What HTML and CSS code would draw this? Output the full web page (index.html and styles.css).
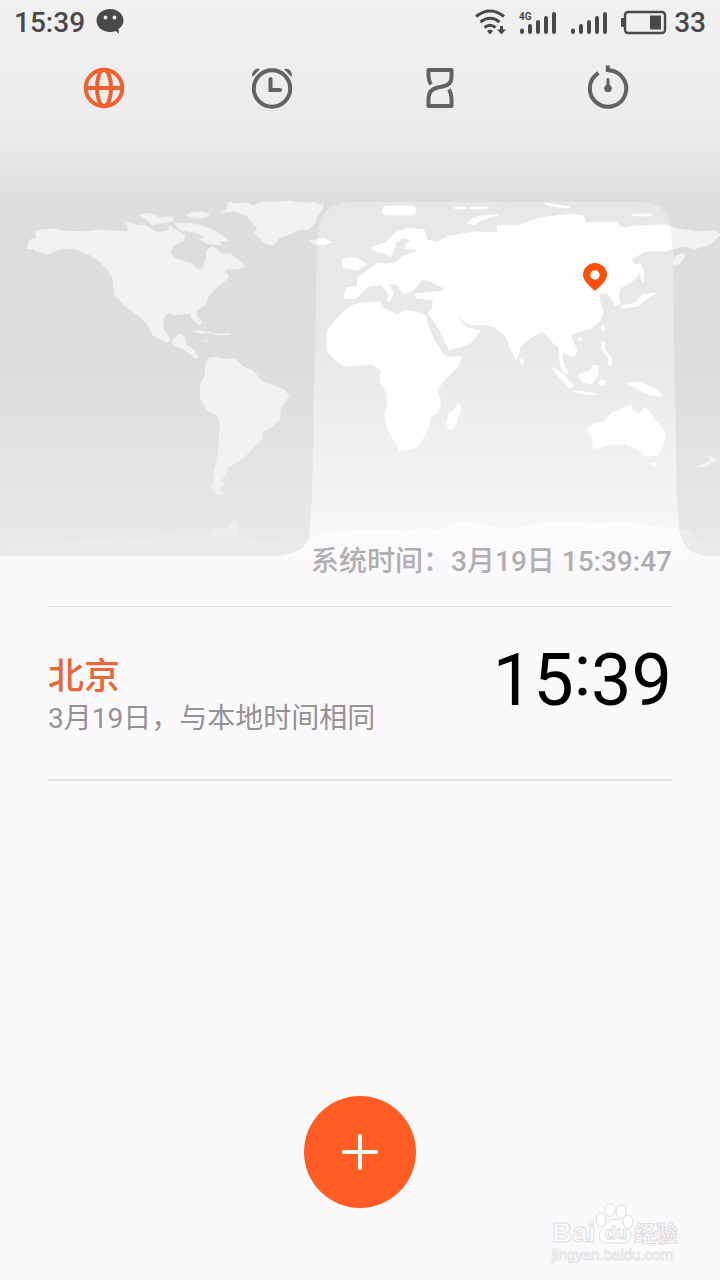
FILE: index.html
```html
<!DOCTYPE html>
<html lang="zh-CN">
<head>
  <meta charset="UTF-8">
  <meta name="viewport" content="width=device-width, initial-scale=1">
  <title>时钟</title>
  <link rel="stylesheet" href="styles.css">
</head>
<body>

<header class="top">
  <div class="status-bar">
    <span>15:39</span>
    <svg class="chat-icon" width="28" height="26" viewBox="0 0 28 26">
      <path fill="#4a484b" d="M14 0C6.500 0 .5 5 .5 11.500S6.500 23 14 23c2 0 4-.4 5.500-1l3.500 2.500-.5-4.500c3-2 5-5 5-8.500C27.500 5 21.500 0 14 0z"/>
      <circle cx="9.500" cy="8.500" r="1.900" fill="#f0eef0"/>
      <circle cx="18.500" cy="8.500" r="1.900" fill="#f0eef0"/>
    </svg>
    <div class="status-right">
      <svg width="32" height="28" viewBox="0 0 32 28" fill="none" stroke="#4a484b" stroke-width="3">
        <path d="M2 8.500q14-11 28 0M6.500 14q9.500-7.500 19 0M10.500 19.500q5.500-4.500 11 0"/>
        <path d="M13 23q3-3 6 0l-3 3.500z" fill="#4a484b" stroke="none"/>
        <path d="M26 18h3v3.500h3l-4.500 5-4.500-5h3z" fill="#4a484b" stroke="none"/>
      </svg>
      <svg width="38" height="28" viewBox="0 0 38 28" fill="none" stroke="#4a484b" stroke-width="4" stroke-linecap="round">
        <path d="M3 22.500v1.500M11 18v6M19 14v10M27 10v14M35 6v18"/>
        <text class="net-type" x="0" y="12">4G</text>
      </svg>
      <svg width="38" height="28" viewBox="0 0 38 28" fill="none" stroke="#4a484b" stroke-width="4" stroke-linecap="round">
        <path d="M3 22.500v1.500M11 18v6M19 14v10M27 10v14M35 6v18"/>
      </svg>
      <svg width="46" height="28" viewBox="0 0 46 28">
        <rect x="4" y="4" width="40" height="21" rx="3" fill="none" stroke="#4a484b" stroke-width="2.400"/>
        <rect x="0" y="10" width="4" height="9" rx="1" fill="#4a484b"/>
        <rect x="29" y="7.500" width="11" height="14" fill="#4a484b"/>
      </svg>
      <span>33</span>
    </div>
  </div>

  <nav class="tabs">
    <button type="button" class="tab active" aria-label="世界时钟">
      <svg width="42" height="42" viewBox="0 0 42 42" fill="none" stroke="currentColor" stroke-width="4">
        <circle cx="21" cy="21" r="18.300"/>
        <ellipse cx="21" cy="21" rx="7" ry="18.300"/>
        <path d="M2 21h38"/>
      </svg>
    </button>
    <button type="button" class="tab" aria-label="闹钟">
      <svg width="42" height="42" viewBox="0 0 42 42" fill="none" stroke="currentColor" stroke-width="4">
        <circle cx="21" cy="21.500" r="18.200"/>
        <path d="M19.500 12v11H29" stroke-linecap="round"/>
        <path d="M1 9C1 4 4 1 9 2L2.500 9zM41 9c0-5-3-8-8-7l6.500 7z" fill="currentColor" stroke="none"/>
      </svg>
    </button>
    <button type="button" class="tab" aria-label="计时器">
      <svg width="42" height="42" viewBox="0 0 42 42" fill="none" stroke="currentColor" stroke-width="4" stroke-linejoin="round">
        <path d="M12 17.500Q9.500 13 9.500 9V3h23v7c0 6-3 8-9 9.500l-5 1c-6 1.500-9 5-9 10.500v8h23v-8q0-4-2.500-8.500"/>
      </svg>
    </button>
    <button type="button" class="tab" aria-label="秒表">
      <svg width="42" height="42" viewBox="0 0 42 42" fill="none" stroke="currentColor" stroke-width="4">
        <path d="M21 3.300A18.200 18.200 0 1 1 11.500 6"/>
        <path d="M20.800-1.500V5"/>
        <path d="M21 12.500V21" stroke-width="3" stroke-linecap="round"/>
        <circle cx="21" cy="21.500" r="3.800" fill="currentColor" stroke="none"/>
      </svg>
    </button>
  </nav>
</header>

<main>
  <section class="world">
    <svg class="map" viewBox="0 132 720 474">
      <defs>
        <linearGradient id="night" gradientUnits="userSpaceOnUse" x1="0" y1="132" x2="0" y2="556">
          <stop offset="0" stop-color="#ebeaed"/>
          <stop offset=".08" stop-color="#e5e4e7"/>
          <stop offset=".17" stop-color="#dddcdf"/>
          <stop offset=".55" stop-color="#dddcdf"/>
          <stop offset="1" stop-color="#e9e8ea"/>
        </linearGradient>
        <linearGradient id="day" gradientUnits="userSpaceOnUse" x1="0" y1="202" x2="0" y2="556">
          <stop offset="0" stop-color="#e7e6e9"/>
          <stop offset=".45" stop-color="#e9e8eb"/>
          <stop offset=".8" stop-color="#f3f2f5"/>
          <stop offset="1" stop-color="#faf9fc"/>
        </linearGradient>
        <linearGradient id="ice" gradientUnits="userSpaceOnUse" x1="0" y1="520" x2="0" y2="556">
          <stop offset="0" stop-color="#fefefe"/>
          <stop offset="1" stop-color="#fbf9fc"/>
        </linearGradient>
        <linearGradient id="ice-night" gradientUnits="userSpaceOnUse" x1="0" y1="520" x2="0" y2="556">
          <stop offset="0" stop-color="#efeef0"/>
          <stop offset="1" stop-color="#e9e8ea"/>
        </linearGradient>
        <path id="daylight" d="M350 202H642Q668 203 671 228L673 250 674 340 677 500 679 530Q683 555 708 556H280Q307 552 309 536L312 500 315 340 317 245 319 226Q324 203 350 202z"/>
        <clipPath id="lit"><use href="#daylight"/></clipPath>
        <path id="antarctica" d="M0 548 60 543 75 541 90 538 105 540 120 537 135 540 155 539 157 534 175 535 195 537 213 534 212 530 228 528 232 522 237 520 239 535 260 541 300 544 315 537 340 531 365 530 390 530 405 531 425 528 437 531 450 525 465 521 480 524 510 529 530 524 560 522 600 524 625 521 650 526 680 529 696 533 684 538 720 545V556H0z"/>
        <g id="land">
          <!-- north america -->
          <path d="M27 249 30 240 37 238 35 232 42 230 56 229 62 231 85 232 100 230 115 231 127 232 129 228 126 223 136 225 146 226 158 233 168 231 170 226 178 231 185 236 183 241 173 245 170 252 174 258 186 262 193 265 198 270 203 268 206 260 207 250 212 247 218 250 221 254 231 254 238 260 245 266 238 269 227 269 224 272 228 275 227 279 218 286 208 296 206 304 196 311 197 316 202 323 199 325 193 320 190 313 175 315 170 313 165 315 163 320 163 328 168 336 170 341 166 342 153 335 148 325 138 315 125 306 115 295 113 278 105 267 98 260 90 255 76 249 68 248 57 250 48 254 36 251 33 248z"/>
          <path d="M172 341 179 334 184 336 186 345 194 350 198 358 195 358 185 350 174 345z"/>
          <path d="M140 215 150 213 160 218 172 217 173 221 160 223 152 225 146 219z"/>
          <ellipse cx="198" cy="215" rx="11" ry="3"/>
          <path d="M175 224Q192 221 210 229T227 241L219 241 221 245 206 243 200 239 205 237 195 232 180 230z"/>
          <path d="M222 212 228 208 227 203 231 202 234 204 248 203 252 206 262 202 278 202 290 201 300 203 315 203 320 205 323 203 322 210 317 216 315 223 309 229 298 230 290 234 279 238 274 245 266 244 254 233 258 230 256 226 246 215 235 211z"/>
          <path d="M192 331 202 331 211 333 200 333zM213 334H230L222 335zM203 341H208"/>
          <!-- south america -->
          <path d="M206 364 209 358 216 357 222 359 235 359 243 367 252 370 263 382 285 390 289 396 281 407 279 420 270 428 262 431 262 438 253 448 243 458 234 464 228 467 226 475 221 480 223 484 219 488 223 495 217 494 212 487 215 480 213 477 216 465 219 450 220 422 216 414 208 411 200 397 201 383 205 376z"/>
          <!-- europe and asia -->
          <path d="M344 298 346 288 357 287 358 277 370 269 378 263 385 264 395 263 403 256 417 252 417 249 405 249 406 244 412 240 404 238 396 242 393 252 390 257 385 253 372 250 373 247 385 243 395 233 408 228 424 230 427 240 437 242 450 236 475 232 498 233 497 226 510 225 517 226 540 218 572 214 583 216 586 223 599 222 617 223 622 228 635 226 645 226 655 225 665 225 678 229 700 232 715 231 720 235 712 243 695 249 685 246 665 251 645 251 632 259 633 264 642 265 640 270 636 278 630 283 620 288 618 295 620 304 615 306 613 300 608 294 600 293 599 299 603 312 600 321 590 329 577 332 570 335 572 340 577 350 575 355 572 357 563 352 562 360 568 373 565 374 561 368 559 347 552 342 547 335 542 331 530 338 520 347 518 356 516 359 511 350 507 338 495 327 488 325 477 325 468 324 458 316 462 324 468 328 480 331 472 342 460 347 449 350 442 334 432 318 428 314 433 307 433 300 417 298 415 294 443 291 444 288 432 282 422 279 416 287 412 291 403 294 398 285 388 283 393 293 391 300 387 301 389 295 382 285 370 285 362 292 355 299z"/>
          <path d="M342 260 350 257 358 259 367 264 357 270 343 267z"/>
          <path d="M309 241 318 240 323 238 331 242 324 245 315 244z"/>
          <rect x="382" y="206" width="34" height="9" rx="4.500"/>
          <ellipse cx="460" cy="208" rx="6" ry="1"/>
          <ellipse cx="479" cy="208" rx="10" ry="1"/>
          <path d="M467 223Q474 214 498 215L484 219Q478 221 475 225z"/>
          <path d="M544 203 570 207 565 208 547 205z"/>
          <ellipse cx="642" cy="215" rx="10" ry="1"/>
          <path d="M640 263Q646 272 643 282L640 276z"/>
          <path d="M673 263Q674 256 683 253 687 255 680 263L674 265z"/>
          <path d="M621 306 635 303 642 295 656 293 645 300 638 306 622 308z"/>
          <ellipse cx="603" cy="328" rx="1.500" ry="3"/>
          <ellipse cx="580" cy="339" rx="2" ry="1.500"/>
          <path d="M602 342 605 342 604 349 611 357 611 366 608 364 609 358 602 350z"/>
          <ellipse cx="522" cy="362" rx="1.500" ry="3"/>
          <path d="M552 367 562 373 574 386 570 388 560 378z"/>
          <path d="M573 391 584 392 596 394 584 394z"/>
          <path d="M579 374 590 371 593 365 598 366 598 374 592 384 582 382z"/>
          <circle cx="602" cy="383" r="3"/>
          <path d="M627 383 638 382 658 390 662 396 650 395 640 390z"/>
          <!-- africa -->
          <path d="M327 332 331 325 342 314 350 306 362 303 380 302 382 308 398 315 405 310 420 313 426 316 427 323 434 340 445 357 461 357 458 366 444 380 437 390 441 403 438 412 430 418 428 430 418 446 410 449 400 451 395 442 388 430 385 415 388 404 386 390 380 383 381 370 372 364 365 365 345 366 335 360 327 350z"/>
          <path d="M459 403 461 409 454 428 449 429 447 424 449 413 454 410z"/>
          <!-- oceania -->
          <path d="M588 429 596 423 604 422 612 413 618 411 624 407 631 405 632 410 640 414 644 408 649 411 655 421 664 430 665 440 658 455 645 456 636 448 625 444 610 444 594 449 592 438z"/>
          <path d="M650 463H656L654 466z"/>
          <path d="M695 467 705 464 710 460 708 455 717 460 705 467z"/>
        </g>
      </defs>
      <rect x="0" y="132" width="720" height="424" fill="url(#night)"/>
      <use href="#land" class="land-night"/>
      <use href="#antarctica" fill="url(#ice-night)"/>
      <use href="#daylight" fill="url(#day)"/>
      <g clip-path="url(#lit)">
        <use href="#land" class="land-day"/>
        <use href="#antarctica" fill="url(#ice)"/>
      </g>
      <!-- pin on the selected city -->
      <path fill="#f9500a" d="M595 291C591 287 583 281 583 275a12 12 0 0 1 24 0c0 6-8 12-12 16z"/>
      <circle cx="595" cy="275" r="4.700" fill="#fdfaf8"/>
    </svg>
    <p class="system-time">系统时间：3月19日 15:39:47</p>
  </section>

  <ul class="cities">
    <li class="city">
      <div>
        <h2 class="city-name">北京</h2>
        <p class="city-date">3月19日，与本地时间相同</p>
      </div>
      <time class="city-time">15<span class="colon">:</span>39</time>
    </li>
  </ul>
</main>

<button type="button" class="add" aria-label="添加城市">
  <svg width="36" height="36" viewBox="0 0 36 36" stroke="#fff" stroke-width="4" stroke-linecap="round">
    <path d="M18 2v32M2 18h32"/>
  </svg>
</button>

<svg class="watermark" width="136" height="64" viewBox="0 0 136 64">
  <g fill="#fff" stroke="#dddce0" stroke-width="1">
    <ellipse cx="53" cy="17.500" rx="5" ry="6.500"/>
    <ellipse cx="62" cy="8" rx="5" ry="6.500"/>
    <ellipse cx="73" cy="9.500" rx="5" ry="6.500"/>
    <ellipse cx="80" cy="20" rx="5" ry="6.500"/>
    <path d="M67 17c5 0 7 5 11 8 8 6 6 16-4 16-4 0-9-1-14 0-9 1-12-9-4-16 4-4 6-8 11-8z"/>
    <text class="mark-name" x="4" y="40">Bai</text>
    <text class="mark-du" x="57" y="37">du</text>
    <text class="mark-cn" x="86" y="39">经验</text>
    <text class="mark-url" x="4" y="58">jingyan.baidu.com</text>
  </g>
</svg>

</body>
</html>
```
FILE: styles.css
```css
* { box-sizing: border-box; }
body {
  position: relative;
  display: flex;
  flex-direction: column;
  min-height: 100vh;
  margin: 0;
  background: #fbf9fc;
  font-family: Roboto, "Noto Sans CJK SC", sans-serif;
  font-size: 28px;
}
h2, p, ul { margin: 0; padding: 0; }
button { padding: 0; border: 0; background: none; cursor: pointer; }

.top { background: linear-gradient(#f2f1f2, #ebeaed); }
.status-bar {
  display: flex;
  align-items: center;
  height: 44px;
  padding: 0 14px;
  color: #4a484b;
  font-weight: 500;
}
.chat-icon { margin-left: 11px; }
.status-right { display: flex; align-items: center; gap: 13px; margin-left: auto; }
.status-right span { margin-left: -6px; }
.net-type { font: 700 10px Roboto, sans-serif; fill: #4a484b; stroke: none; }

.tabs { display: flex; height: 88px; padding: 0 28px 0 20px; }
.tab { display: flex; flex: 1; align-items: center; justify-content: center; color: #636164; }
.tab svg { overflow: visible; }
.tab.active { color: #f0622d; }

/* map and caption share one grid cell */
.world { display: grid; }
.map { grid-area: 1 / 1; display: block; width: 100%; height: auto; }
.land-night { fill: #f2f1f4; stroke: #f2f1f4; stroke-linejoin: round; }
.land-day { fill: #fefefe; stroke: #fefefe; stroke-linejoin: round; }
.system-time {
  grid-area: 1 / 1;
  align-self: end;
  justify-self: end;
  padding: 0 48px 24px;
  line-height: 40px;
  font-weight: 500;
  color: #b0aeb1;
}

.cities { margin: 0 48px; border-top: 1px solid #e3e1e5; list-style: none; }
.city {
  display: flex;
  justify-content: space-between;
  height: 174px;
  padding-top: 46px;
  border-bottom: 2px solid #e1dfe3;
}
.city-name { line-height: 48px; font-size: 36px; font-weight: 500; color: #e3683a; }
.city-date { line-height: 36px; color: #949295; }
.city-time { line-height: 56px; font-size: 72px; color: #000; }
.colon { vertical-align: 10px; line-height: 1px; }

.add {
  display: flex;
  align-items: center;
  justify-content: center;
  width: 112px;
  height: 112px;
  margin: auto auto 72px;
  border-radius: 50%;
  background: #ff5c26;
}

.watermark { position: absolute; right: 36px; bottom: 14px; }
.mark-name { font: 700 28px "Liberation Sans", sans-serif; }
.mark-du { font: 700 18px "Liberation Sans", sans-serif; }
.mark-cn { font: 700 22px "Noto Sans CJK SC", sans-serif; }
.mark-url { font: 400 15px "Liberation Sans", sans-serif; stroke: #e6e5e8; }
```
